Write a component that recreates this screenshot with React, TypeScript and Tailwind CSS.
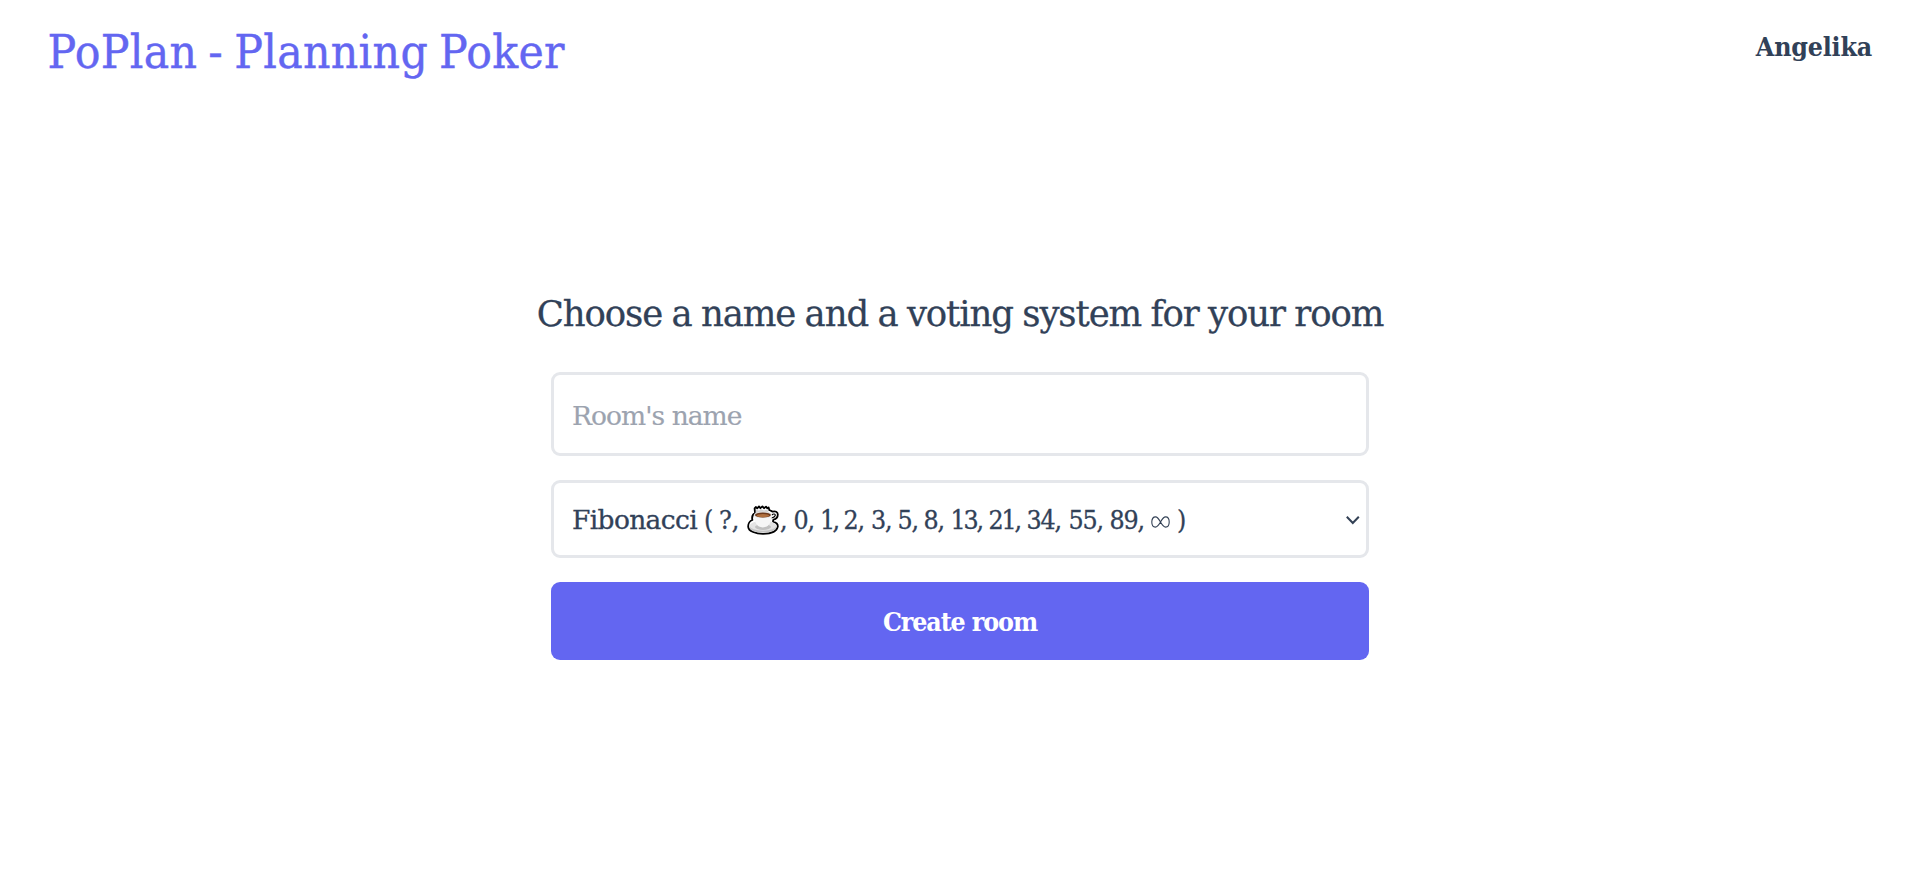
function CoffeeIcon() {
  return (
    <svg viewBox="0 0 32 30" className="mr-[1px] block h-[30px] w-[32px] shrink-0" aria-hidden="true">
      <path
        d="M8 8 L7.6 3.4 L8.8 2 L10.2 3.4 L12 1.4 L13.4 3.2 L15.4 1.4 L17 3.2 L19 1.6 L20.4 3.4 L21.6 2.4 L22.4 5.2 C24 5.6 24.8 6.4 25.6 6.6 C28.4 5.8 30.8 6.8 30.8 9.4 C30.8 12.4 28.8 14 26.4 14.6 C26.2 15.4 26 16 26 16.6 C29.6 17.6 31 19.4 30.8 21.6 C29.8 26.6 23.2 28.8 16 28.8 C8.8 28.8 1.6 26.4 1.2 21.8 C1 18.6 3 15.8 5.4 15 C4.8 12.4 5.4 9.4 8 8 Z"
        fill="#fff"
        stroke="#000"
        strokeWidth="1.8"
        strokeLinejoin="round"
      />
      <path d="M8.6 8 L9.2 4.8 L12 5.4 L14 4 L17 5.4 L20.2 4.4 L22 8 Z" fill="#d3d3d3" />
      <ellipse cx="16" cy="22.2" rx="13.4" ry="5.4" fill="#c4c4c4" />
      <ellipse cx="16" cy="20.8" rx="13.2" ry="5" fill="#e4e4e4" />
      <ellipse cx="16" cy="22" rx="8" ry="2.9" fill="#c0c0c0" />
      <path d="M24.8 10 C26.4 8.4 28.6 8.8 28.2 10.6 C27.8 12.2 26 12.6 24.4 13" fill="#fff" stroke="#000" strokeWidth="1.2" />
      <path d="M7 9.8 C7.2 17 9.8 22.4 15.8 22.4 C22 22.4 24.6 17 24.8 9.8 Z" fill="#f6f6f6" />
      <ellipse cx="15.9" cy="9.8" rx="9" ry="3.3" fill="#dedede" />
      <ellipse cx="15.9" cy="10" rx="7.9" ry="2.6" fill="#6d3a1c" />
      <ellipse cx="15.9" cy="10.7" rx="6.2" ry="1.6" fill="#b0703f" />
    </svg>
  );
}

function InfinityIcon() {
  return (
    <svg viewBox="0 0 19 12" className="block h-[12px] w-[19px]" fill="none" stroke="#334155" role="img" aria-label="∞">
      <path
        d="M9.5 6 C7.8 3 6.6 0.9 4.6 0.9 C2.2 0.9 0.8 3 0.8 6 C0.8 9 2.2 11.1 4.4 11.1 C6.6 11.1 7.8 9 9.5 6 C11.2 3 12.4 0.9 14.6 0.9 C16.8 0.9 18.2 3 18.2 6 C18.2 9 16.8 11.1 14.6 11.1 C12.4 11.1 11.2 9 9.5 6 Z"
        strokeWidth="1.1"
      />
    </svg>
  );
}

const digit = 'tracking-[-1.2px]';

const cards = [
  { label: '0,', className: `w-[26.5px] ${digit}` },
  { label: '1,', className: 'w-[23.5px] tracking-[-2.6px]' },
  { label: '2,', className: `w-[27.5px] ${digit}` },
  { label: '3,', className: `w-[26.5px] ${digit}` },
  { label: '5,', className: `w-[26px] ${digit}` },
  { label: '8,', className: `w-[27px] ${digit}` },
  { label: '13,', className: 'w-[38px] tracking-[-2.2px]' },
  { label: '21,', className: 'w-[38px] tracking-[-2.2px]' },
  { label: '34,', className: `w-[42px] ${digit}` },
  { label: '55,', className: `w-[41px] ${digit}` },
  { label: '89,', className: `w-[41.5px] ${digit}` },
];

export default function App() {
  return (
    <div className="flex h-[892px] w-full flex-col overflow-hidden bg-white font-['Roboto_Slab','DejaVu_Serif_Condensed','DejaVu_Serif',serif] text-slate-700">
      <header className="flex items-start justify-between pt-[25px] pr-[48px] pl-[47.5px]">
        <h1 className="text-[47.5px] leading-[54px] tracking-[0.3px] whitespace-nowrap text-[#6366f1] [-webkit-text-stroke:0.4px] [word-spacing:-2.8px]">
          PoPlan - Planning Poker
        </h1>
        <span className="mt-[4px] text-[26.5px] leading-[36px] font-bold tracking-[-0.2px]">Angelika</span>
      </header>
      <main className="mt-[213px] flex flex-col items-center">
        <h2 className="font-['DejaVu_Serif',serif] text-[35.5px] leading-[44px] tracking-[-1.1px] whitespace-nowrap [-webkit-text-stroke:0.3px] [word-spacing:-0.8px]">
          Choose a name and a voting system for your room
        </h2>
        <form className="mt-[36px] flex w-[818px] flex-col gap-6" onSubmit={(e) => e.preventDefault()}>
          <input
            type="text"
            placeholder="Room's name"
            className="h-[84px] w-full rounded-[9px] border-[3px] border-[#e5e7eb] px-[18px] pt-[2px] font-['DejaVu_Serif',serif] text-[26.5px] tracking-[-0.95px] outline-none [-webkit-text-stroke:0.2px] placeholder:text-[#9ca3af]"
          />
          <button
            type="button"
            aria-haspopup="listbox"
            className="flex h-[78px] w-full items-center rounded-[9px] border-[3px] border-[#e5e7eb] pt-[2px] pr-[5px] pl-[18px] text-left text-[26.5px] whitespace-nowrap [-webkit-text-stroke:0.3px]"
          >
            <span className="w-[132px] font-['DejaVu_Serif',serif] tracking-[-0.65px]">Fibonacci</span>
            <span className="w-[15px]">(</span>
            <span className="w-[28px]">?,</span>
            <CoffeeIcon />
            <span className="w-[13.5px]">,</span>
            {cards.map((card) => (
              <span key={card.label} className={card.className}>
                {card.label}
              </span>
            ))}
            <span className="w-[26px] pt-[4px]">
              <InfinityIcon />
            </span>
            <span>)</span>
            <svg
              viewBox="0 0 16 16"
              className="-mt-[1px] ml-auto h-[16px] w-[16px]"
              fill="none"
              stroke="#334155"
              strokeWidth="2"
            >
              <path d="M1.8 4.8 L7.8 11 L13.8 4.8" />
            </svg>
          </button>
          <button
            type="submit"
            className="h-[78px] w-full rounded-[9px] bg-[#6366f1] pt-[2px] text-[26.5px] font-bold tracking-[-1.1px] text-white"
          >
            Create room
          </button>
        </form>
      </main>
    </div>
  );
}
